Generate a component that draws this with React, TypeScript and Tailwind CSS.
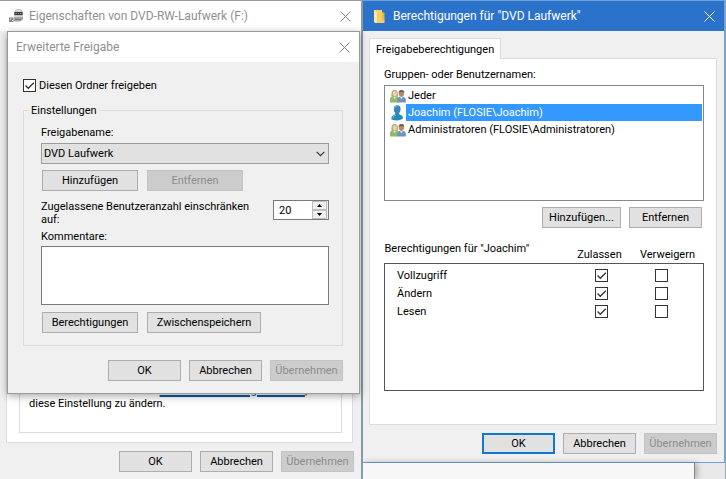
import type { ReactNode } from "react";

const dialogText = "font-[Roboto,'Liberation_Sans',sans-serif] text-[11px] leading-[13px] text-black";
const titleText = "text-[12px] leading-4";

function Close({ className }: { className: string }) {
  return (
    <button type="button" aria-label="Schließen" className={className}>
      <svg width="11" height="11" viewBox="0 0 11 11" fill="none" stroke="currentColor">
        <path d="M.5.5l10 10M10.5.5l-10 10" />
      </svg>
    </button>
  );
}

function Button({ children, width = "w-[73px]", disabled = false, primary = false }: {
  children: ReactNode;
  width?: string;
  disabled?: boolean;
  primary?: boolean;
}) {
  const look = disabled
    ? "border border-[#c3c3c3] bg-[#cccccc] text-[#8c8c8c]"
    : primary
      ? "border-2 border-[#1377cc] bg-[#e1e1e1]"
      : "border border-[#adadad] bg-[#e1e1e1]";
  return (
    <button type="button" disabled={disabled} className={`flex h-[21px] shrink-0 items-center justify-center whitespace-nowrap ${width} ${look}`}>
      {children}
    </button>
  );
}

function Footer({ primary = false }: { primary?: boolean }) {
  return (
    <div className="flex justify-end gap-2">
      <Button primary={primary}>OK</Button>
      <Button>Abbrechen</Button>
      <Button disabled>Übernehmen</Button>
    </div>
  );
}

function Checkbox({ id, label, checked = false }: { id?: string; label?: string; checked?: boolean }) {
  return (
    <span className="inline-grid size-[13px] shrink-0 align-top">
      <input
        id={id}
        aria-label={label}
        type="checkbox"
        defaultChecked={checked}
        className="peer col-start-1 row-start-1 size-[13px] appearance-none border border-[#333333] bg-white"
      />
      <svg viewBox="0 0 13 13" fill="none" stroke="#333333" strokeWidth="1.3" className="pointer-events-none invisible col-start-1 row-start-1 size-[13px] peer-checked:visible">
        <path d="M2.5 6.5l2.8 2.8L10.8 3.7" />
      </svg>
    </span>
  );
}

function DriveIcon() {
  return (
    <svg width="16" height="16" viewBox="0 0 16 16">
      <path d="M6 6Q6 1 10.500 1T15 6V9H6z" fill="#b5b5b5" />
      <path d="M7 3.800Q8 1.500 10.500 1.500T14 3.800z" fill="#dedede" />
      <rect x="6.500" y="4" width="8" height="3" fill="#3a3a3a" />
      <path d="M7.500 5.500h1.500M10 5.500h1M12 5.500h1.500" stroke="#aaa" strokeWidth=".8" />
      <path d="M6 8h9v3.500L12 13.500H6z" fill="#a5a5a5" />
      <path d="M6 8.200h9" stroke="#ececec" />
      <path d="M7 11.500h6" stroke="#777" />
      <rect x="1" y="9.500" width="4.500" height="4.500" fill="#8c8c8c" />
      <path d="M2 11h1M4 12.500h1" stroke="#eee" />
    </svg>
  );
}

function GroupIcon() {
  return (
    <svg width="16" height="14" viewBox="0 0 16 14" className="shrink-0">
      <path d="M0 13.500V10q.3-2.600 3.500-2.800h2Q8.500 7.500 8.500 10v3.500z" fill="#8fba6a" />
      <path d="M3 7.200l1.700 3L6.200 7.200z" fill="#e6f0d0" />
      <path d="M1.500 7.500Q.8 1 4.700.8 8.600 1 8 7.500L6.200 8h-3z" fill="#b6a97c" />
      <ellipse cx="4.900" cy="4.700" rx="2" ry="2.700" fill="#efd3a8" />
      <path d="M7.300 13.500V10.500Q7.500 8 10.500 7.700h2q3 .3 3.300 2.800v3z" fill="#6f93bd" />
      <path d="M10 7.700l1.400 2.800 1.400-2.800z" fill="#e5edf6" />
      <ellipse cx="11.400" cy="4.600" rx="2.500" ry="3.300" fill="#b5886a" />
      <path d="M8.700 4.200Q8.600 1 11.500 1t2.800 3.200L13 2.900H10z" fill="#6a5a54" />
    </svg>
  );
}

function UserIcon() {
  return (
    <svg width="16" height="16" viewBox="0 0 16 16" className="shrink-0">
      <path d="M1.500 14.500Q.8 11 4.500 9.700L5.500 8h3.200l.8 1.500q4 1 3.300 4.300-4.700 2.800-11.300.7z" fill="#2789b5" />
      <path d="M3.800 4Q3.800.3 7.200.3T10.600 4Q10.400 8.800 7.200 8.800T3.800 4z" fill="#3588b8" />
      <path d="M4.500 3.500Q5 1.200 7.300 1" stroke="#7bbcda" fill="none" />
      <path d="M2.800 13.200q.3-2.200 3-3" stroke="#6cc4dd" fill="none" />
    </svg>
  );
}

function AdvancedSharing() {
  return (
    <section className="absolute inset-x-0 top-[30px] mr-px ml-[7px] border border-[#9a9a9a] bg-[#f0f0f0] shadow-[0_2px_8px_rgba(0,0,0,0.35)]">
      <header className={`flex h-[30px] items-center justify-between bg-white pr-[9px] pl-2 text-[#8f8f8f] ${titleText}`}>
        <h2>Erweiterte Freigabe</h2>
        <Close className="text-[#808080]" />
      </header>
      <div className="pt-[17px] pr-4 pb-3 pl-[15px]">
        <div className="flex items-center gap-[3px]">
          <Checkbox id="share" checked />
          <label htmlFor="share">Diesen Ordner freigeben</label>
        </div>
        <fieldset className="mt-3 border border-[#dcdcdc] pr-[13px] pb-3 pl-[17px]">
          <legend className="-ml-[12px] px-[2px]">Einstellungen</legend>
          <label htmlFor="sharename" className="mt-[9px] block">Freigabename:</label>
          <div className="mt-1 grid">
            <select id="sharename" className="col-start-1 row-start-1 h-[21px] w-full appearance-none border border-[#9d9d9d] bg-[#e1e1e1] pl-[2px]">
              <option>DVD Laufwerk</option>
            </select>
            <svg width="9" height="6" viewBox="0 0 9 6" fill="none" stroke="#333" strokeWidth="1.200" className="pointer-events-none col-start-1 row-start-1 mr-1 self-center justify-self-end">
              <path d="M.7.800l3.800 3.800L8.300.800" />
            </svg>
          </div>
          <div className="mt-[6px] flex gap-[9px] pl-px">
            <Button width="w-24">Hinzufügen</Button>
            <Button width="w-24" disabled>Entfernen</Button>
          </div>
          <div className="mt-[9px] flex items-start justify-between">
            <label htmlFor="limit" className="w-[215px]">Zugelassene Benutzeranzahl einschränken auf:</label>
            <div className="flex h-5 w-14 border border-[#7a7a7a] bg-white">
              <input id="limit" type="text" inputMode="numeric" defaultValue="20" className="min-w-0 flex-1 pl-[5px]" />
              <div className="flex w-4 flex-col bg-[#f0f0f0] pr-px">
                <button type="button" aria-label="Mehr" className="flex flex-1 items-center justify-center border border-[#bdbdbd]">
                  <svg width="5" height="3" viewBox="0 0 5 3"><path d="M0 3L2.500 0 5 3z" /></svg>
                </button>
                <button type="button" aria-label="Weniger" className="flex flex-1 items-center justify-center border border-[#bdbdbd]">
                  <svg width="5" height="3" viewBox="0 0 5 3"><path d="M0 0l2.500 3L5 0z" /></svg>
                </button>
              </div>
            </div>
          </div>
          <label htmlFor="comments" className="mt-1 block">Kommentare:</label>
          <textarea id="comments" className="mt-[3px] block h-[59px] w-full resize-none border border-[#7a7a7a] bg-white p-1" />
          <div className="mt-[7px] flex gap-[9px] pl-px">
            <Button width="w-24">Berechtigungen</Button>
            <Button width="w-[114px]">Zwischenspeichern</Button>
          </div>
        </fieldset>
        <div className="mt-[14px]">
          <Footer />
        </div>
      </div>
    </section>
  );
}

function PropertiesWindow() {
  return (
    <section className="relative flex flex-col border-t border-r-2 border-t-[#9a9a9a] border-r-[#8b98a6] bg-[#f0f0f0]">
      <header className={`flex h-[30px] items-center bg-white pr-[10px] pl-2 text-[#8f8f8f] ${titleText}`}>
        <DriveIcon />
        <h1 className="ml-[5px] flex-1">Eigenschaften von DVD-RW-Laufwerk (F:)</h1>
        <Close className="text-[#808080]" />
      </header>
      <div className="flex flex-1 flex-col pt-2 pr-[7px] pb-[7px] pl-[6px]">
        <div className="mr-px mb-2 flex flex-1 flex-col border border-[#dcdcdc] bg-white px-[10px] pb-[9px] pl-3">
          <div className="flex flex-1 flex-col justify-end border border-[#dcdcdc] px-[9px] pb-[22px]">
            <p>
              Verwenden Sie hierfür das <a href="#netzwerk" className="text-[#0b57a8] underline decoration-2">Netzwerk- und Freigabecenter</a>, um
              <br />
              diese Einstellung zu ändern.
            </p>
          </div>
        </div>
        <Footer />
      </div>
      <AdvancedSharing />
    </section>
  );
}

const principals = [
  { name: "Jeder", group: true },
  { name: "Joachim (FLOSIE\\Joachim)", group: false },
  { name: "Administratoren (FLOSIE\\Administratoren)", group: true },
];
const rights = ["Vollzugriff", "Ändern", "Lesen"];

function PermissionsWindow() {
  return (
    <section className="-ml-px border border-[#6fa0d8] bg-[#f0f0f0]">
      <header className={`flex h-[30px] items-center bg-[#2b72cb] pr-[9px] pl-[11px] text-white ${titleText}`}>
        <svg width="11" height="13" viewBox="0 0 11 13">
          <path d="M0 0h8v9.500l2.500.5v3H1l-1-1z" fill="#f5cf66" />
          <path d="M0 0l3 2v11L0 12z" fill="#ffe9a3" />
          <path d="M8 2v8l2.500 1V3z" fill="#e9b94a" />
        </svg>
        <h2 className="ml-2 flex-1">Berechtigungen für "DVD Laufwerk"</h2>
        <Close className="text-white" />
      </header>
      <div className="pt-[7px] pr-[7px] pb-2 pl-[6px]">
        <div role="tablist" className="flex">
          <button type="button" role="tab" aria-selected="true" className="-mb-px h-[21px] border border-b-0 border-[#dcdcdc] bg-white px-[6px]">
            Freigabeberechtigungen
          </button>
        </div>
        <div role="tabpanel" className="border border-[#dcdcdc] bg-white pt-[9px] pr-3 pb-[33px] pl-[14px]">
          <h3>Gruppen- oder Benutzernamen:</h3>
          <ul className="mt-1 h-[116px] border border-[#828790] p-px pl-[5px]">
            {principals.map((p) => (
              <li key={p.name} className="flex h-[17px] items-center">
                {p.group ? <GroupIcon /> : <UserIcon />}
                <span className={p.group ? "flex-1 pl-[2px]" : "flex h-[17px] flex-1 items-center bg-[#3399ff] pl-[2px] text-white"}>{p.name}</span>
              </li>
            ))}
          </ul>
          <div className="mt-[6px] flex justify-end gap-2 pr-[2px]">
            <Button width="w-[79px]">Hinzufügen...</Button>
            <Button>Entfernen</Button>
          </div>
          <table className="mt-[14px] w-full table-fixed border-collapse">
            <colgroup>
              <col />
              <col className="w-[60px]" />
              <col className="w-[60px]" />
              <col className="w-3" />
            </colgroup>
            <thead>
              <tr className="h-[21px]">
                <th className="p-0 text-left align-top font-normal">Berechtigungen für "Joachim"</th>
                <th className="p-0 pr-1 pb-[2px] align-bottom font-normal">Zulassen</th>
                <th colSpan={2} className="p-0 pb-[2px] align-bottom font-normal">Verweigern</th>
              </tr>
            </thead>
            <tbody className="border border-[#555555]">
              <tr className="h-[3px]"><td colSpan={4} /></tr>
              {rights.map((r) => (
                <tr key={r} className="h-[18px]">
                  <td className="p-0 pl-3">{r}</td>
                  <td className="p-0 text-center"><Checkbox label={`${r} zulassen`} checked /></td>
                  <td className="p-0 text-center"><Checkbox label={`${r} verweigern`} /></td>
                  <td />
                </tr>
              ))}
              <tr className="h-[70px]"><td colSpan={4} /></tr>
            </tbody>
          </table>
        </div>
        <div className="mt-2">
          <Footer primary />
        </div>
      </div>
    </section>
  );
}

export default function App() {
  return (
    <main className={`grid min-h-screen grid-cols-2 bg-[#e9e9e9] ${dialogText}`}>
      <PropertiesWindow />
      <div className="flex flex-col border-r border-[#8fa5b8]">
        <PermissionsWindow />
        <div className="mr-[30px] flex-1 border-r border-[#8a8a8a] bg-[#f7f7f7] shadow-[2px_0_6px_rgba(0,0,0,0.3)]" />
      </div>
    </main>
  );
}
